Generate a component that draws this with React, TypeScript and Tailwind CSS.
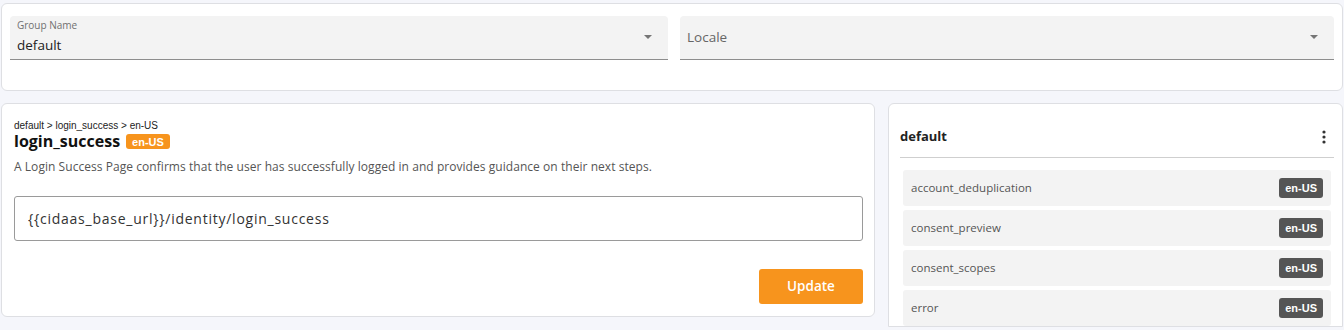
import { useState } from "react";

const ITEMS = ["account_deduplication", "consent_preview", "consent_scopes", "error"];

const font = "font-['Open_Sans',sans-serif]";

const Caret = () => (
  <svg width="8" height="4" viewBox="0 0 8 4" className="fill-[#757575]">
    <path d="M0 0h8L4 4z" />
  </svg>
);

const SelectBox = ({ label, value }: { label: string; value?: string }) => (
  <div className="relative flex h-[44px] items-center rounded-t-[4px] border-b border-[#8d8d8d] bg-[#f3f3f3] px-[7px]">
    {value ? (
      <div className="-mt-[4px] flex flex-col">
        <span className="text-[10px] leading-[12px] text-[#707070]">{label}</span>
        <span className="mt-[6px] text-[13.5px] leading-[16px] text-[#222]">{value}</span>
      </div>
    ) : (
      <span className="-mt-[1px] text-[13.5px] text-[#666]">{label}</span>
    )}
    <div className="ml-auto mr-[9px] -mt-[1px]">
      <Caret />
    </div>
  </div>
);

const Badge = ({ text, dark }: { text: string; dark?: boolean }) => (
  <span
    className={
      "flex items-center rounded-[3px] px-[6px] font-['Liberation_Sans',sans-serif] text-[11px] font-bold leading-[14px] text-white " +
      (dark ? "h-[20px] bg-[#555]" : "h-[15px] bg-[#f7941d]")
    }
  >
    {text}
  </span>
);

export default function App() {
  const [url, setUrl] = useState("{{cidaas_base_url}}/identity/login_success");

  return (
    <div className={"min-h-[330px] bg-[#f5f6fb] px-px pt-[3px] " + font}>
      <div className="rounded-[6px] border border-[#dedfe3] bg-white px-[8px] pb-[30px] pt-[12px]">
        <div className="grid grid-cols-[658fr_654fr] gap-[12px]">
          <SelectBox label="Group Name" value="default" />
          <SelectBox label="Locale" />
        </div>
      </div>

      <div className="mt-[12px] flex gap-[13px]">
        <div className="flex-1 self-start rounded-[6px] border border-[#dedfe3] bg-white pb-[12px] pl-[12px] pr-[11px] pt-[16px]">
          <div className="font-['Liberation_Sans',sans-serif] text-[10px] leading-[12px] text-[#222]">
            default &gt; login_success &gt; en-US
          </div>
          <div className="flex items-center gap-[6px]">
            <span className="text-[16px] font-bold leading-[19px] text-[#111]">login_success</span>
            <Badge text="en-US" />
          </div>
          <p className="mt-[8px] text-[12px] leading-[16px] tracking-[0.05px] text-[#555]">
            A Login Success Page confirms that the user has successfully logged in and provides guidance on their next steps.
          </p>
          <input
            value={url}
            onChange={(e) => setUrl(e.target.value)}
            className="mt-[21px] h-[45px] w-full rounded-[3px] border border-[#9a9a9a] px-[13px] text-[14px] tracking-[0.75px] text-[#333] outline-none"
          />
          <div className="mt-[28px] flex justify-end">
            <button className="h-[35px] w-[104px] rounded-[3px] bg-[#f7941d] text-[13.5px] font-semibold text-white">
              Update
            </button>
          </div>
        </div>

        <div className="w-[455px] rounded-t-[6px] border border-[#dedfe3] bg-white pl-[11px] pr-[8px] pt-[14px]">
          <div className="flex h-[40px] items-center justify-between border-b border-[#cfcfcf] pb-[2px]">
            <span className="text-[13px] font-bold text-[#222]">default</span>
            <svg width="4" height="14" viewBox="0 0 4 14" className="mr-[8px] fill-[#333]">
              <circle cx="2" cy="2" r="1.6" />
              <circle cx="2" cy="7" r="1.6" />
              <circle cx="2" cy="12" r="1.6" />
            </svg>
          </div>
          <div className="flex flex-col gap-[4px] px-[3px] pt-[12px]">
            {ITEMS.map((it) => (
              <div key={it} className="flex h-[36px] items-center justify-between rounded-[3px] bg-[#f3f3f3] pl-[8px] pr-[8px]">
                <span className="text-[11.5px] text-[#555]">{it}</span>
                <Badge text="en-US" dark />
              </div>
            ))}
          </div>
        </div>
      </div>
    </div>
  );
}
